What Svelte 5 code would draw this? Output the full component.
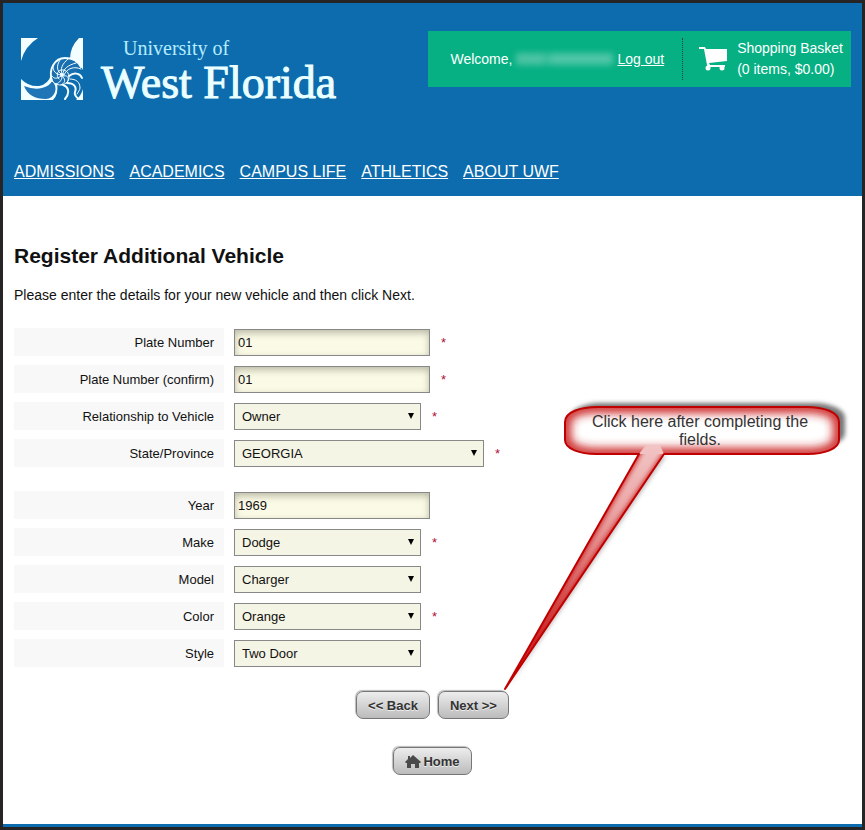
<script>
	const navLinks = ['ADMISSIONS', 'ACADEMICS', 'CAMPUS LIFE', 'ATHLETICS', 'ABOUT UWF'];

	const fieldGroups = [
		[
			{ id: 'plate', label: 'Plate Number', type: 'text', value: '01', required: true },
			{ id: 'plate-confirm', label: 'Plate Number (confirm)', type: 'text', value: '01', required: true },
			{ id: 'relationship', label: 'Relationship to Vehicle', type: 'select', value: 'Owner', required: true },
			{ id: 'state', label: 'State/Province', type: 'select', value: 'GEORGIA', required: true, wide: true }
		],
		[
			{ id: 'year', label: 'Year', type: 'text', value: '1969' },
			{ id: 'make', label: 'Make', type: 'select', value: 'Dodge', required: true },
			{ id: 'model', label: 'Model', type: 'select', value: 'Charger' },
			{ id: 'color', label: 'Color', type: 'select', value: 'Orange', required: true },
			{ id: 'style', label: 'Style', type: 'select', value: 'Two Door' }
		]
	];

	// Outline of the hint bubble with its pointer
	const bubble =
		'M139 56H96C80 56 65 51 65 42V24C65 14 80 9 98 9H306C324 9 339 14 339 24V42C339 51 324 56 308 56H164L5 291Z';
</script>

<div class="page">
	<header class="header">
		<div class="header-top">
			<a href="#home" class="logo">
				<svg class="logo-mark" viewBox="0 0 62 62" aria-hidden="true">
					<g fill="#f2feff">
						<path d="M0 0H17Q4 8 0 23Z" />
						<path d="M58 0H62V32Q59 25 49 21Q49 9 58 0Z" />
						<path d="M0 41Q8 49 18 48Q28 46 30 36L36 45Q38 56 32 62H0Z" />
						<path d="M62 51V62H55Q60 58 62 51Z" />
					</g>
					<path d="M3 48Q13 52 21 50Q29 48 31 43Q36 48 34 54Q31 61 25 61Q8 61 3 48Z" fill="#1f75b6" />
					<path d="M31 42C28 29 35 20 45 20C53 20 57 25 59 30L48 42C44 48 34 49 31 42Z" fill="#1a6fb1" />
					<g fill="none" stroke="#f2feff" stroke-width="1" stroke-linecap="round">
						<path d="M31 43C27 31 34 20 44 20C53 20 58 25 60 29" stroke-width="2" />
						<path d="M31 42C33 48 43 49 47 43C50 37 46 31 40 32C36 33 35 38 38 41" />
						<path d="M40 37C34 36 32 33 32 28" />
						<path d="M40 36C36 33 35 28 39 22" />
						<path d="M41 36C39 31 41 26 47 21" />
						<path d="M42 36C42 31 47 27 55 25" />
						<path d="M43 37C46 30 53 28 60 31" />
						<path d="M40 38C36 41 33 41 31 38" />
						<path d="M41 39C41 43 37 46 34 46" />
						<path d="M42 39C45 42 44 45 40 47" />
						<path d="M43 38C46 37 48 39 47 43" />
						<path d="M48 38C53 34 59 35 61 40" stroke-width="2" />
						<path d="M49 41C55 41 59 44 59 50C59 52 57 54 56 56" />
						<path d="M46 45C53 45 56 49 54 54C53 57 56 60 58 61" stroke-width="2" />
						<path d="M42 47C48 49 49 55 44 61" stroke-width="2" />
					</g>
					<circle cx="41" cy="37" r="2" fill="#f2feff" />
				</svg>
				<span class="logo-text">
					<span class="logo-small">University of</span>
					<span class="logo-large">West Florida</span>
				</span>
			</a>

			<div class="account">
				<div class="welcome">
					<span>Welcome,</span>
					<span class="hidden-name"></span>
					<a href="#logout">Log out</a>
				</div>
				<a href="#basket" class="basket">
					<svg class="cart" viewBox="0 0 28 24" aria-hidden="true">
						<path d="M0 0H6L7 2H28V14L10 16L11 18H26V20H9L8 18L5 2H0Z" fill="#fff" />
						<circle cx="9" cy="21" r="2.5" fill="#fff" />
						<circle cx="23" cy="21" r="2.5" fill="#fff" />
					</svg>
					<span>Shopping Basket<br />(0 items, $0.00)</span>
				</a>
			</div>
		</div>

		<nav class="nav">
			{#each navLinks as link}
				<a href="#{link.toLowerCase().replace(' ', '-')}">{link}</a>
			{/each}
		</nav>
	</header>

	<main class="content">
		<h1>Register Additional Vehicle</h1>
		<p class="intro">Please enter the details for your new vehicle and then click Next.</p>

		<form class="vehicle-form" on:submit|preventDefault>
			{#each fieldGroups as group}
				<div class="group">
					{#each group as field (field.id)}
						<div class="row">
							<label for={field.id}>{field.label}</label>
							{#if field.type === 'text'}
								<input id={field.id} type="text" value={field.value} />
							{:else}
								<span class="select-box" class:wide={field.wide}>
									<select id={field.id}>
										<option>{field.value}</option>
									</select>
								</span>
							{/if}
							{#if field.required}
								<span class="required">*</span>
							{/if}
						</div>
					{/each}
				</div>
			{/each}

			<div class="buttons">
				<button type="button">&lt;&lt; Back</button>
				<button type="submit">Next &gt;&gt;</button>
			</div>
		</form>

		<div class="home">
			<button type="button">
				<svg class="house" viewBox="0 0 16 13" aria-hidden="true">
					<path d="M8 0L16 7L15 8H14V13H10V9H6V13H2V8H1L0 7L3 4V1H5V3Z" fill="#4a4a4a" />
				</svg>
				Home
			</button>
		</div>
	</main>

	<!-- Hint pointing at the Next button -->
	<div class="callout">
		<svg viewBox="0 0 350 300" aria-hidden="true">
			<defs>
				<filter id="soft" x="-20%" y="-40%" width="140%" height="180%">
					<feGaussianBlur stdDeviation="2" />
				</filter>
				<filter id="glow" x="-20%" y="-40%" width="140%" height="180%">
					<feGaussianBlur stdDeviation="5" />
				</filter>
				<linearGradient id="tail" x1="0" y1="1" x2="0" y2="0">
					<stop offset="0" stop-color="#c00000" />
					<stop offset="0.3" stop-color="#d65353" />
					<stop offset="0.75" stop-color="#eba8a8" />
					<stop offset="1" stop-color="#f2c4c4" />
				</linearGradient>
				<clipPath id="bubble">
					<path d={bubble} />
				</clipPath>
				<clipPath id="pointer">
					<path d="M139 56L5 291L164 56Z" />
				</clipPath>
			</defs>
			<rect x="70" y="5" width="275" height="45" rx="30" ry="15" fill="#777" filter="url(#soft)" />
			<path d="M144 58L7 291L166 58Z" fill="#bbb" filter="url(#soft)" />
			<path d={bubble} fill="#fff" />
			<g clip-path="url(#bubble)">
				<rect x="65" y="9" width="274" height="47" rx="30" ry="15" fill="none" stroke="#cc2525" stroke-width="12" filter="url(#glow)" />
				<path d="M139 56L5 291L164 56L160 47H146Z" fill="url(#tail)" />
			</g>
			<g clip-path="url(#pointer)">
				<path d="M143 49L5 291L169 49" fill="none" stroke="#cc2525" stroke-width="4" filter="url(#soft)" />
			</g>
			<path d={bubble} fill="none" stroke="#c00000" stroke-width="2" stroke-linejoin="round" />
		</svg>
		<p>Click here after completing the fields.</p>
	</div>
</div>

<style>
	:global(body) {
		background: #262425;
	}

	.page {
		position: relative;
		box-sizing: border-box;
		min-height: 100vh;
		border: 3px solid #262425;
		background: #fff;
		box-shadow: inset 0 -3px #0c6cae;
		font-family: 'Liberation Sans', Arial, sans-serif;
		font-size: 13px;
		color: #111;
	}

	.header {
		padding: 28px 11px 14px;
		background: #0c6cae;
	}

	.header-top {
		display: flex;
		justify-content: space-between;
		align-items: flex-start;
	}

	.logo {
		display: flex;
		gap: 18px;
		padding: 7px 0 0 7px;
		color: #eaffff;
		text-decoration: none;
		font-family: 'Liberation Serif', 'Times New Roman', serif;
	}

	.logo-mark {
		width: 62px;
		height: 62px;
	}

	.logo-text {
		display: flex;
		flex-direction: column;
	}

	.logo-small {
		padding-left: 22px;
		font-size: 20px;
		line-height: 20px;
		color: #b5ecff;
	}

	.logo-large {
		font-size: 46px;
		line-height: 50px;
		-webkit-text-stroke: 1px #eaffff;
	}

	.account {
		display: flex;
		align-items: center;
		box-sizing: border-box;
		height: 56px;
		padding: 0 8px 0 22px;
		background: #06b083;
		color: #fff;
		font-size: 14px;
		line-height: 21px;
	}

	.account a {
		color: #fff;
	}

	.welcome {
		display: flex;
		align-items: center;
		gap: 4px;
		height: 42px;
		padding-right: 18px;
		border-right: 1px dotted #24443d;
	}

	.hidden-name {
		width: 97px;
		height: 12px;
		background: linear-gradient(90deg, #4cc3a3 0 28%, #2bb993 32%, #50c5a7 36% 100%);
		filter: blur(3px);
	}

	.basket {
		display: flex;
		align-items: center;
		gap: 10px;
		padding-left: 16px;
	}

	.account .basket {
		text-decoration: none;
	}

	.cart {
		width: 28px;
		height: 24px;
	}

	.nav {
		display: flex;
		flex-wrap: wrap;
		gap: 15px;
		margin-top: 54px;
		font-size: 16px;
		line-height: 20px;
	}

	.nav a {
		color: #fff;
	}

	.content {
		padding: 46px 11px 48px;
	}

	h1 {
		margin: 0;
		font-size: 21px;
		line-height: 28px;
	}

	.intro {
		margin: 15px 0 23px;
		font-size: 14px;
		line-height: 20px;
	}

	.group {
		display: flex;
		flex-direction: column;
		gap: 9px;
		margin-bottom: 24px;
	}

	.row {
		display: flex;
		align-items: center;
		height: 28px;
	}

	label {
		box-sizing: border-box;
		width: 210px;
		margin-right: 10px;
		padding: 2px 10px 0 0;
		background: #f8f8f8;
		line-height: 26px;
		text-align: right;
	}

	input,
	select {
		box-sizing: border-box;
		height: 27px;
		margin: 0;
		border: 1px solid #888;
		border-radius: 0;
		font: inherit;
		color: #111;
	}

	input {
		width: 196px;
		padding: 0 3px;
		background: #fafae6;
		box-shadow: inset 0 3px 7px rgba(90, 90, 70, 0.4);
	}

	.select-box {
		position: relative;
		width: 187px;
	}

	.select-box.wide {
		width: 250px;
	}

	.select-box::after {
		content: '';
		position: absolute;
		top: 10px;
		right: 7px;
		border: 3px solid transparent;
		border-top: 6px solid #000;
		border-bottom: 0;
		pointer-events: none;
	}

	select {
		display: block;
		width: 100%;
		padding: 0 7px;
		appearance: none;
		background: #f5f5e5;
	}

	.required {
		margin-left: 11px;
		color: #b0103a;
	}

	.buttons {
		display: flex;
		justify-content: center;
		gap: 8px;
		margin-bottom: 28px;
	}

	.home {
		display: flex;
		justify-content: center;
	}

	button {
		display: flex;
		align-items: center;
		gap: 2px;
		height: 28px;
		padding: 0 11px;
		border: 1px solid #777;
		border-radius: 7px;
		background: linear-gradient(#ededed, #bbb);
		box-shadow: -1px -1px 1px #bbb;
		font: bold 13px 'Liberation Sans', Arial, sans-serif;
		color: #333;
		text-shadow: 0 1px 0 #eee;
	}

	.house {
		width: 16px;
		height: 13px;
	}

	.callout {
		position: absolute;
		top: 395px;
		left: 497px;
		width: 350px;
		pointer-events: none;
	}

	.callout svg {
		display: block;
		width: 350px;
		height: 300px;
	}

	.callout p {
		position: absolute;
		top: 15px;
		left: 90px;
		width: 220px;
		margin: 0;
		font-size: 16px;
		line-height: 18px;
		text-align: center;
		color: #333;
	}
</style>
